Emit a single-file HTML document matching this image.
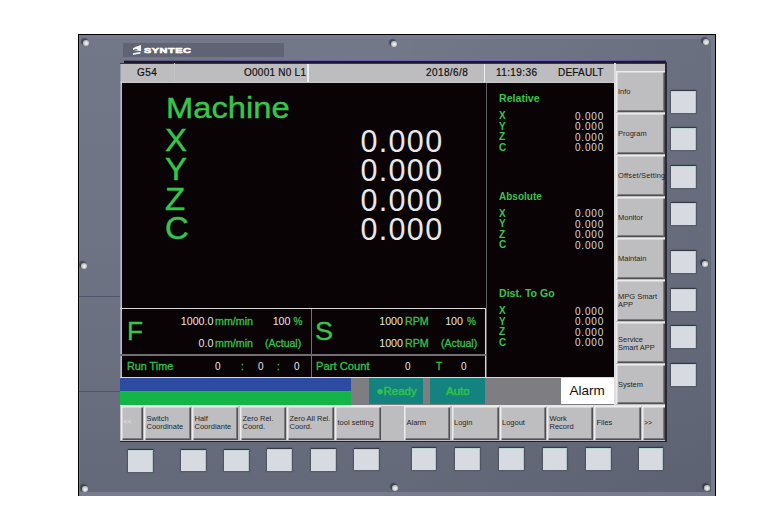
<!DOCTYPE html>
<html><head><meta charset="utf-8">
<style>
*{margin:0;padding:0;box-sizing:border-box}
html,body{width:779px;height:527px;overflow:hidden;background:#fff}
body{position:relative;font-family:"Liberation Sans",sans-serif}
.a{position:absolute}
.t{position:absolute;line-height:1;white-space:nowrap;transform-origin:0 0}
.r{transform-origin:100% 0;text-align:right}
.scr{position:absolute;width:6px;height:6px;border-radius:50%;background:radial-gradient(circle at 55% 55%,#f4f2f2 0,#dcd8d8 35%,#a6b4b4 70%,#6a707c 100%);box-shadow:-1.5px -1.5px 1px 0.5px rgba(35,35,50,.55)}
.pb{position:absolute;width:24.5px;height:21.5px;background:#d8dae2;box-shadow:0 -1px 1px rgba(30,35,45,.6),0 0 1px 1px rgba(60,65,75,.35);border-top:1px solid #bcd2d2;border-right:1px solid #b0c4c4}
.sk{position:absolute;background:#bebec0;box-shadow:inset 1.5px 1.5px 0 #ececee,inset -1px -1px 0 #505054,inset -2px -2px 0 #7a7a7e;font-size:7.5px;color:#262626;line-height:8px;padding-left:2.5px;white-space:nowrap;overflow:hidden}
.g{color:#36c64a}
.gs{color:#30c248;-webkit-text-stroke:0.3px #30c248}
.w{color:#e6e6e6}
.ws{color:#dadada}
.hd{font-size:10px;color:#101010;-webkit-text-stroke:0.2px #101010}
.sm{font-size:10px}
</style></head><body>
<!-- panel -->
<div class="a" style="left:78px;top:34px;width:638px;height:462px;background:#767b8e;border-top:1px solid #000;border-left:1px solid #000;border-right:1px solid #000"></div>
<div class="a" style="left:80px;top:39px;width:631px;height:453px;background:linear-gradient(#727888,#6e7484 40%,#696f7f 75%,#636978)"></div>
<div class="a" style="left:80px;top:39px;width:631px;height:453px;background:linear-gradient(90deg,rgba(0,0,0,0) 50%,rgba(10,10,25,.08))"></div>
<div class="a" style="left:79px;top:296px;width:41px;height:1px;background:#50546a"></div>
<div class="a" style="left:79px;top:391px;width:41px;height:1px;background:#50546a"></div>
<!-- screws -->
<div class="scr" style="left:83px;top:40px"></div>
<div class="scr" style="left:391px;top:41px;width:6px;height:6px"></div>
<div class="scr" style="left:703px;top:39px"></div>
<div class="scr" style="left:81px;top:263px"></div>
<div class="scr" style="left:702px;top:261px"></div>
<div class="scr" style="left:82px;top:486px;width:6px;height:6px"></div>
<div class="scr" style="left:392px;top:485px;width:6px;height:6px"></div>
<div class="scr" style="left:704px;top:485px"></div>
<!-- logo bar -->
<div class="a" style="left:123px;top:43px;width:161px;height:14px;background:#5f6373"></div>
<svg class="a" style="left:132px;top:44px" width="10" height="12" viewBox="0 0 10 12">
<path d="M1 4.2 Q4 2.6 9 1.1 L9 7.2 L1 6.1 Z" fill="#f4f4f4"/>
<path d="M2.2 5.1 H5.3 V6 H2.2Z" fill="#5f6373"/>
<path d="M1 9.3 Q4.5 8.2 8.4 7.9 L8.4 9.7 Q4.5 10 1 11 Z" fill="#f4f4f4"/>
</svg>
<div class="t" style="left:144px;top:47px;font-size:8px;font-weight:bold;color:#fff;-webkit-text-stroke:0.6px #fff;letter-spacing:0.4px;transform:scaleX(1.36)">SYNTEC</div>

<!-- screen bezel -->
<div class="a" style="left:124px;top:60px;width:542px;height:3px;background:#1e1828"></div>
<div class="a" style="left:124px;top:59.5px;width:542px;height:1px;background:linear-gradient(90deg,#5a5878,#6a60b0 40%,#6e62c0 80%,#504a80)"></div>
<div class="a" style="left:665px;top:62px;width:1.5px;height:380px;background:#2a2a36"></div>
<div class="a" style="left:120px;top:63px;width:545px;height:378px;background:#bdbdbf"></div>
<div class="a" style="left:119.5px;top:63px;width:1px;height:378px;background:#9a9eaa"></div>
<div class="a" style="left:120px;top:62.5px;width:545px;height:1px;background:#3a3444"></div>
<!-- header -->
<div class="t hd" style="left:137px;top:68px;letter-spacing:0.5px">G54</div>
<div class="a" style="left:174px;top:63px;width:1px;height:19px;background:#c3c3c5"></div>
<div class="t hd" style="left:244px;top:68px;letter-spacing:0.25px">O0001 N0 L1</div>
<div class="a" style="left:307px;top:63.5px;width:1.5px;height:19px;background:#ececec"></div>
<div class="t hd" style="left:426px;top:68px;letter-spacing:0.4px">2018/6/8</div>
<div class="a" style="left:483.5px;top:63.5px;width:1.5px;height:19px;background:#ececec"></div>
<div class="t hd" style="left:496px;top:68px;letter-spacing:0.4px">11:19:36</div>
<div class="t hd" style="left:558px;top:68px;letter-spacing:0.2px">DEFAULT</div>

<!-- main black -->
<div class="a" style="left:120px;top:81.5px;width:494px;height:1.5px;background:#cacacc"></div>
<div class="a" style="left:121.5px;top:83px;width:492.5px;height:294px;background:#0a0305"></div>
<div class="a" style="left:485.5px;top:83px;width:1.5px;height:294px;background:#606062"></div>
<div class="t g" style="left:166px;top:92.5px;font-size:30px;-webkit-text-stroke:0.4px #38c84c;transform:scaleX(1.09)">Machine</div>
<div class="t g" style="left:165px;top:125.5px;font-size:30.5px;line-height:29.6px;-webkit-text-stroke:0.4px #38c84c;transform:scaleX(1.08)">X<br>Y<br>Z<br>C</div>
<div class="t w r" style="left:300px;top:126.5px;width:143.5px;font-size:30.5px;line-height:29.6px;letter-spacing:1.35px;color:#e8e8e8">0.000<br>0.000<br>0.000<br>0.000</div>

<div class="t g sm" style="left:499px;top:94px;font-weight:bold;transform:scaleX(1.06)">Relative</div>
<div class="t g sm" style="left:499px;top:111px;font-weight:bold;line-height:10.5px">X<br>Y<br>Z<br>C</div>
<div class="t ws r" style="left:540px;top:111.5px;width:64px;font-size:10px;line-height:10.5px;letter-spacing:0.8px">0.000<br>0.000<br>0.000<br>0.000</div>

<div class="t g sm" style="left:499px;top:192px;font-weight:bold;transform:scaleX(1.0)">Absolute</div>
<div class="t g sm" style="left:499px;top:208.5px;font-weight:bold;line-height:10.5px">X<br>Y<br>Z<br>C</div>
<div class="t ws r" style="left:540px;top:209px;width:64px;font-size:10px;line-height:10.5px;letter-spacing:0.8px">0.000<br>0.000<br>0.000<br>0.000</div>

<div class="t g sm" style="left:499px;top:289px;font-weight:bold;transform:scaleX(1.06)">Dist. To Go</div>
<div class="t g sm" style="left:499px;top:306px;font-weight:bold;line-height:10.5px">X<br>Y<br>Z<br>C</div>
<div class="t ws r" style="left:540px;top:306.5px;width:64px;font-size:10px;line-height:10.5px;letter-spacing:0.8px">0.000<br>0.000<br>0.000<br>0.000</div>

<!-- F/S area -->
<div class="a" style="left:120px;top:308px;width:366px;height:1px;background:#d8d8d8"></div>
<div class="a" style="left:485px;top:308px;width:1px;height:69px;background:#d8d8d8"></div>
<div class="a" style="left:311px;top:309px;width:1px;height:68px;background:#707072"></div>
<div class="a" style="left:120px;top:354px;width:366px;height:1.5px;background:#707072"></div>
<div class="a" style="left:120px;top:376.5px;width:494px;height:1.5px;background:#d8d8dc"></div>

<div class="t g" style="left:126.5px;top:318.5px;font-size:25px;-webkit-text-stroke:0.3px #38c84c;transform:scaleX(1.05)">F</div>
<div class="t g" style="left:315px;top:318.5px;font-size:25px;-webkit-text-stroke:0.3px #38c84c;transform:scaleX(1.08)">S</div>
<div class="t w r sm" style="left:150px;top:317px;width:63.5px;transform-origin:100% 0;transform:scaleX(1.07)">1000.0</div>
<div class="t gs sm" style="left:215px;top:317px;transform:scaleX(1.07)">mm/min</div>
<div class="t w r sm" style="left:240px;top:317px;width:50.5px;transform:scaleX(1.07)">100</div>
<div class="t gs sm" style="left:293.5px;top:317px">%</div>
<div class="t w r sm" style="left:150px;top:339px;width:63.5px;transform:scaleX(1.07)">0.0</div>
<div class="t gs sm" style="left:215px;top:339px;transform:scaleX(1.07)">mm/min</div>
<div class="t gs sm" style="left:264.5px;top:339px;transform:scaleX(1.05)">(Actual)</div>

<div class="t w r sm" style="left:340px;top:317px;width:63px;transform:scaleX(1.07)">1000</div>
<div class="t gs sm" style="left:405px;top:317px;transform:scaleX(1.07)">RPM</div>
<div class="t w r sm" style="left:413px;top:317px;width:50px;transform:scaleX(1.07)">100</div>
<div class="t gs sm" style="left:467px;top:317px">%</div>
<div class="t w r sm" style="left:340px;top:339px;width:63px;transform:scaleX(1.07)">1000</div>
<div class="t gs sm" style="left:405px;top:339px;transform:scaleX(1.07)">RPM</div>
<div class="t gs sm" style="left:441px;top:339px;transform:scaleX(1.05)">(Actual)</div>

<div class="t gs sm" style="left:127px;top:362px;transform:scaleX(1.08)">Run Time</div>
<div class="t w sm" style="left:215px;top:362px">0</div>
<div class="t gs sm" style="left:241px;top:362px">:</div>
<div class="t w sm" style="left:258px;top:362px">0</div>
<div class="t gs sm" style="left:277px;top:362px">:</div>
<div class="t w sm" style="left:294px;top:362px">0</div>
<div class="t gs sm" style="left:316px;top:362px;transform:scaleX(1.12)">Part Count</div>
<div class="t w sm" style="left:405px;top:362px">0</div>
<div class="t gs sm" style="left:436px;top:362px">T</div>
<div class="t w sm" style="left:461px;top:362px">0</div>

<!-- status bar -->
<div class="a" style="left:120px;top:378px;width:494px;height:27px;background:#7e7e82"></div>
<div class="a" style="left:120px;top:378px;width:231px;height:13px;background:#2c4ca2"></div>
<div class="a" style="left:120px;top:392px;width:231px;height:13px;background:#14b548"></div>
<div class="a" style="left:369px;top:378px;width:54px;height:26px;background:#14827e"></div>
<div class="t gs" style="left:376.5px;top:386px;font-size:11.5px;-webkit-text-stroke:0.5px #30c248">&#9679;Ready</div>
<div class="a" style="left:430px;top:378px;width:55px;height:26px;background:#14827e"></div>
<div class="t gs" style="left:446px;top:386px;font-size:11.5px;-webkit-text-stroke:0.5px #30c248">Auto</div>
<div class="a" style="left:561px;top:378px;width:53px;height:26px;background:#fff"></div>
<div class="t" style="left:569.5px;top:383.5px;font-size:13.5px;color:#111">Alarm</div>

<!-- right softkeys -->
<div class="a" style="left:614px;top:63px;width:1.5px;height:342px;background:#dedee0"></div>
<div class="sk" style="left:615.5px;top:71px;width:49.5px;height:41px;line-height:42px">Info</div>
<div class="sk" style="left:615.5px;top:113px;width:49.5px;height:41px;line-height:42px">Program</div>
<div class="sk" style="left:615.5px;top:155px;width:49.5px;height:41px;line-height:42px;letter-spacing:0.15px">Offset/Setting</div>
<div class="sk" style="left:615.5px;top:197px;width:49.5px;height:40px;line-height:42px">Monitor</div>
<div class="sk" style="left:615.5px;top:238px;width:49.5px;height:41px;line-height:42px">Maintain</div>
<div class="sk" style="left:615.5px;top:280px;width:49.5px;height:41px;padding-top:13px">MPG Smart<br>APP</div>
<div class="sk" style="left:615.5px;top:322px;width:49.5px;height:41px;padding-top:14px">Service<br>Smart APP</div>
<div class="sk" style="left:615.5px;top:364px;width:49.5px;height:40px;line-height:42px">System</div>

<!-- bottom softkeys -->
<div class="a" style="left:120px;top:404.5px;width:545px;height:36px;background:#bdbdbf"></div>
<div class="a" style="left:120px;top:404.5px;width:545px;height:1px;background:#e6e6e8"></div>
<div class="sk" style="left:121px;top:405.5px;width:22px;height:34px;line-height:31px;color:#e6e6e6;font-size:7px">&lt;&lt;</div>
<div class="sk" style="left:144px;top:405.5px;width:47px;height:34px;padding-top:9.5px">Switch<br>Coordinate</div>
<div class="sk" style="left:192px;top:405.5px;width:46px;height:34px;padding-top:9.5px">Half<br>Coordiante</div>
<div class="sk" style="left:240px;top:405.5px;width:46px;height:34px;padding-top:9.5px">Zero Rel.<br>Coord.</div>
<div class="sk" style="left:287px;top:405.5px;width:47px;height:34px;padding-top:9.5px">Zero All Rel.<br>Coord.</div>
<div class="sk" style="left:335px;top:405.5px;width:46px;height:34px;line-height:34px">tool setting</div>
<div class="sk" style="left:404px;top:405.5px;width:46px;height:34px;line-height:34px">Alarm</div>
<div class="sk" style="left:451.5px;top:405.5px;width:47.5px;height:34px;line-height:34px">Login</div>
<div class="sk" style="left:499.5px;top:405.5px;width:46px;height:34px;line-height:34px">Logout</div>
<div class="sk" style="left:547px;top:405.5px;width:46px;height:34px;padding-top:9.5px">Work<br>Record</div>
<div class="sk" style="left:594px;top:405.5px;width:46.5px;height:34px;line-height:34px">Files</div>
<div class="sk" style="left:641.5px;top:405.5px;width:23.5px;height:34px;line-height:34px;font-size:7px">&gt;&gt;</div>
<div class="a" style="left:120px;top:440.5px;width:546px;height:1.5px;background:#1e1e30"></div>

<!-- physical buttons right -->
<div class="pb" style="left:671px;top:91px"></div>
<div class="pb" style="left:671px;top:128px"></div>
<div class="pb" style="left:671px;top:166px"></div>
<div class="pb" style="left:671px;top:203px"></div>
<div class="pb" style="left:671px;top:251px"></div>
<div class="pb" style="left:671px;top:289px"></div>
<div class="pb" style="left:671px;top:326px"></div>
<div class="pb" style="left:671px;top:364px"></div>
<!-- physical buttons bottom -->
<div class="pb" style="left:128px;top:450px"></div>
<div class="pb" style="left:181px;top:449.5px"></div>
<div class="pb" style="left:224px;top:449.5px"></div>
<div class="pb" style="left:267px;top:449px"></div>
<div class="pb" style="left:311px;top:449px"></div>
<div class="pb" style="left:354px;top:448.5px"></div>
<div class="pb" style="left:411.5px;top:448px"></div>
<div class="pb" style="left:455px;top:448px"></div>
<div class="pb" style="left:499px;top:448px"></div>
<div class="pb" style="left:542.5px;top:448px"></div>
<div class="pb" style="left:586px;top:448px"></div>
<div class="pb" style="left:638.5px;top:448px"></div>
</body></html>
